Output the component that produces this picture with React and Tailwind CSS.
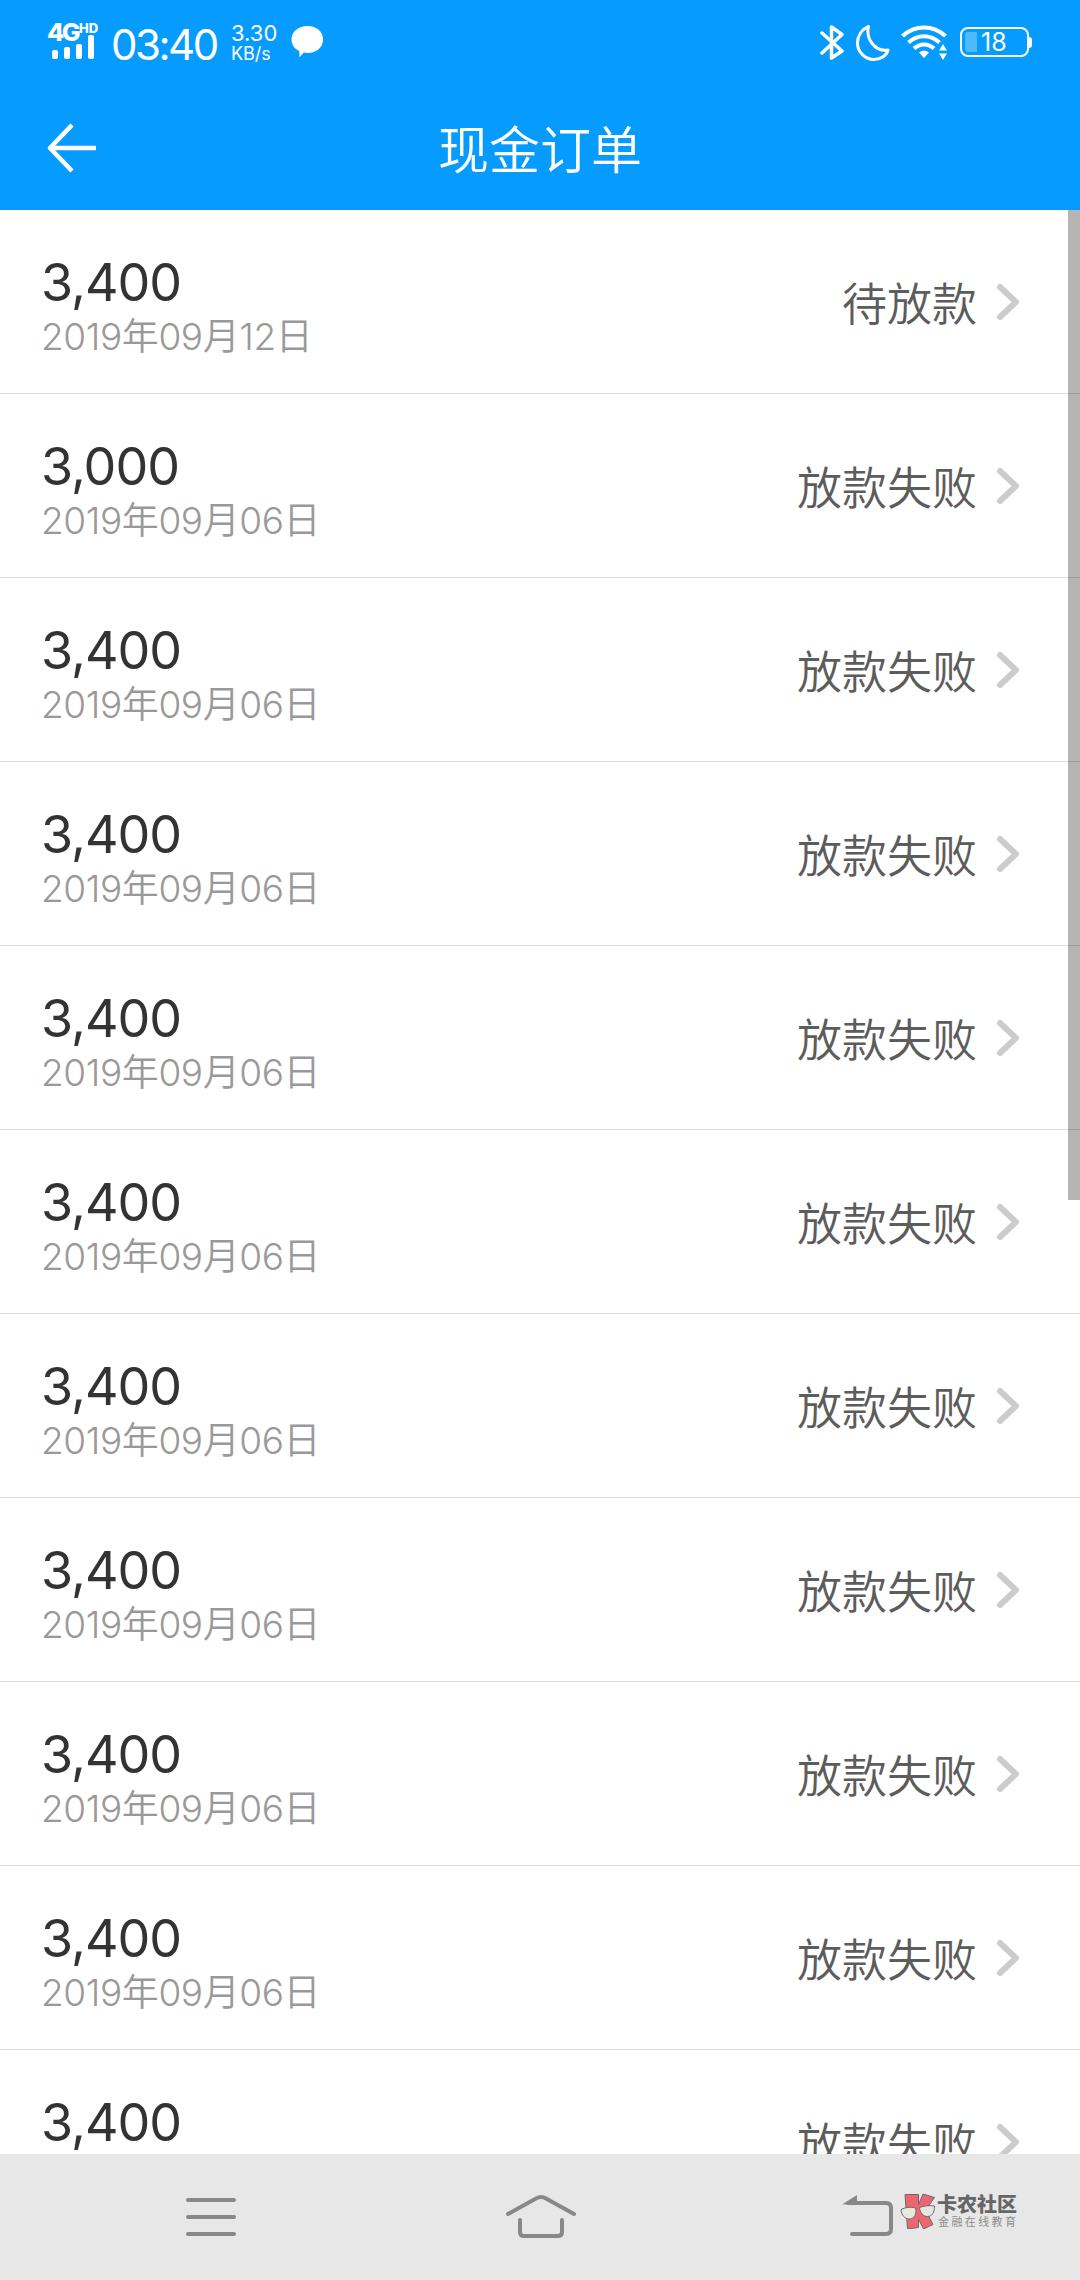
import React from 'react';

const ORDERS = [
  { id: 1, amount: '3,400', date: '2019年09月12日', status: '待放款' },
  { id: 2, amount: '3,000', date: '2019年09月06日', status: '放款失败' },
  { id: 3, amount: '3,400', date: '2019年09月06日', status: '放款失败' },
  { id: 4, amount: '3,400', date: '2019年09月06日', status: '放款失败' },
  { id: 5, amount: '3,400', date: '2019年09月06日', status: '放款失败' },
  { id: 6, amount: '3,400', date: '2019年09月06日', status: '放款失败' },
  { id: 7, amount: '3,400', date: '2019年09月06日', status: '放款失败' },
  { id: 8, amount: '3,400', date: '2019年09月06日', status: '放款失败' },
  { id: 9, amount: '3,400', date: '2019年09月06日', status: '放款失败' },
  { id: 10, amount: '3,400', date: '2019年09月06日', status: '放款失败' },
  { id: 11, amount: '3,400', date: '2019年09月06日', status: '放款失败' },
];

const SignalIcon = () => (
  <div className="flex flex-col w-[54px] h-[36px] shrink-0">
    <div className="flex items-start h-[19px] -ml-[1px] font-extrabold leading-none">
      <span className="text-[25px] leading-[19px] tracking-[-2.5px]">4G</span>
      <span className="ml-[1px] text-[13px] leading-[11px]">HD</span>
    </div>
    <svg className="-mt-[8px] ml-[3px] shrink-0" width="44" height="25" viewBox="0 0 44 25" fill="currentColor">
      <rect x="1" y="16" width="6" height="9" rx="2" />
      <rect x="13" y="13" width="6" height="12" rx="2" />
      <rect x="25" y="10" width="6" height="15" rx="2" />
      <rect x="37" y="1" width="6" height="24" rx="2" />
    </svg>
  </div>
);

const StatusBar = () => (
  <div className="flex items-start h-[84px] pl-[48px] pr-[48px] pt-[23px]">
    <SignalIcon />
    <span className="ml-[9px] text-[42px] leading-[44px] w-[120px] tracking-[-2.5px]">03:40</span>
    <div className="flex flex-col w-[60px]">
      <span className="text-[22px] leading-[20px]">3.30</span>
      <span className="text-[18px] leading-[21px]">KB/s</span>
    </div>
    <svg className="mt-[3px]" width="33" height="32" viewBox="0 0 33 32" fill="currentColor">
      <path d="M16.500 0C25.500 0 32 5.500 32 13.500S25.500 27 16.500 27c-1.300 0-2.600 0-3.800-.4-1.200 1.800-2.700 3.600-4.500 4.400.4-2 .3-4 0-6C3.500 22.800.5 18.500.5 13.500.5 5.500 7.500 0 16.500 0z" />
    </svg>

    <div className="ml-auto flex items-start pt-[2px]">
      <svg width="25" height="35" viewBox="0 0 25 35" fill="none" stroke="currentColor" strokeWidth="3.500" strokeLinejoin="round" strokeLinecap="round">
        <path d="M2 8l20 18-10.500 7V2L22 9.500 2 28" />
      </svg>
      <svg className="ml-[11px]" width="34" height="36" viewBox="0 0 34 36" fill="none" stroke="currentColor" strokeWidth="3" strokeLinejoin="round">
        <path d="M12.500 1.500C5.500 4.500 1.500 11 1.500 18c0 9 7.500 16.500 16.500 16.500 7 0 12.500-4 14-9.500-6 1-11.500-1-15.500-6-4-5-5.500-11-4-17.500z" />
      </svg>
      <svg className="ml-[11px]" width="48" height="36" viewBox="0 0 48 36" fill="none" stroke="currentColor" strokeWidth="4">
        <path d="M1.500 11c12.500-11.500 30.500-11.500 43 0" />
        <path d="M7.500 17.500c9-8.500 22-8.500 31 0" />
        <path d="M13 23.500c5.500-5.500 14.500-5.500 20 0" />
        <path d="M18 27.500c3-2.500 7-2.500 10 0l-5 5.500z" fill="currentColor" stroke="none" />
        <path d="M38 25.500l4-6.500 4 6.500zM38 28.500l4 6.500 4-6.500z" fill="currentColor" stroke="none" />
      </svg>
      <div className="ml-[11px] mt-[2px] flex items-center">
        <div className="flex items-center w-[69px] h-[30px] rounded-[8px] border-2 border-white pl-[3px]">
          <div className="w-[12px] h-[20px] rounded-l-[3px] bg-white/30" />
          <span className="ml-[4px] text-[25px] leading-[26px]">18</span>
        </div>
        <div className="w-[3px] h-[11px] rounded-r-[3px] bg-white" />
      </div>
    </div>
  </div>
);

const TitleBar = () => (
  <div className="grid grid-cols-[100px_1fr_100px] items-center h-[126px]">
    <svg className="ml-[46px] mt-[1px]" width="52" height="50" viewBox="0 0 52 50" fill="none" stroke="currentColor" strokeWidth="4.500">
      <path d="M50 25H4M26 2L4 25l22 23" strokeLinejoin="round" />
    </svg>
    <h1 className="pt-[8px] text-center text-[51px] leading-[60px] font-[350]">现金订单</h1>
  </div>
);

const OrderRow = ({ order }) => (
  <li className="flex items-center justify-between h-[184px] shrink-0 border-b border-[#dedede] pl-[41px] pr-[60px]">
    <div className="flex flex-col pt-[8px]">
      <span className="text-[52px] leading-[62px] font-[380] tracking-[-1px] text-[#333]">{order.amount}</span>
      <span className="text-[37px] leading-[46px] font-[350] tracking-[-0.4px] text-[#999]">{order.date}</span>
    </div>
    <div className="flex items-center">
      <span className="pt-[6px] text-[45px] leading-[60px] font-[350] text-[#5c5c5c]">{order.status}</span>
      <svg className="ml-[19px]" width="24" height="38" viewBox="0 0 24 38" fill="none" stroke="#ccc" strokeWidth="6" strokeLinecap="round" strokeLinejoin="round">
        <path d="M4 4l16 15L4 34" />
      </svg>
    </div>
  </li>
);

const Watermark = () => (
  <div className="flex items-start">
    <svg width="36" height="36" viewBox="0 0 36 36" stroke="#6b6b6b" strokeWidth="1" strokeLinejoin="round">
      <path d="M5 1.500h13.500v10L23 1l11.500 3.500L25.500 17l7.500 14.500-9.500 4.500-5-10v8.500L7.500 36z" fill="#ec6570" />
      <path d="M1 16.500c4.500-2 9.500-3 14.500-1.500 1.500 6-1 10.500-6 11C4.500 26 1.500 22 1 16.500zM19.500 14.500c4.500-1.500 9-2.500 15-1.500 0 6.500-2.500 10.500-7 10.500-4.500 0-7.500-3.500-8-9z" fill="#e7e7e0" />
    </svg>
    <div className="ml-[1px] mt-[2px] flex flex-col">
      <span className="text-[20px] leading-[20px] font-black text-[#666]">卡农社区</span>
      <span className="ml-[1px] text-[11px] leading-[14px] tracking-[2.400px] text-[#8c8c8c]">金融在线教育</span>
    </div>
  </div>
);

const NavBar = () => (
  <nav className="flex items-start h-[126px] shrink-0 bg-[#e7e7e7] pt-[39px] pl-[184px]">
    <svg className="mt-[4px]" width="54" height="42" viewBox="0 0 54 42" stroke="#888" strokeWidth="4" strokeLinecap="round">
      <path d="M4 3h46M4 20h46M4 37h46" />
    </svg>
    <svg className="ml-[266px] mt-[1px]" width="74" height="46" viewBox="0 0 74 46" fill="none" stroke="#888" strokeWidth="4" strokeLinecap="round" strokeLinejoin="round">
      <path d="M4 20L32 4.500Q37 1.500 42 4.500L70 20" />
      <path d="M16 26v12q0 4 4 4h34q4 0 4-4V26" />
    </svg>
    <svg className="ml-[264px] mt-[1px]" width="54" height="44" viewBox="0 0 54 44" fill="none" stroke="#888" strokeWidth="4" strokeLinecap="round">
      <path d="M6 9h38q5 0 5 5v21q0 5-5 5H10" />
      <path d="M0 10.500L15 1v9.500z" fill="#888" stroke="none" />
    </svg>
    <div className="ml-[4px]">
      <Watermark />
    </div>
  </nav>
);

export default function App() {
  return (
    <div className="flex flex-col w-[1080px] h-[2280px] overflow-hidden bg-white font-['Inter','Noto_Sans_CJK_SC',sans-serif]">
      <header className="h-[210px] shrink-0 bg-[#069bff] text-white">
        <StatusBar />
        <TitleBar />
      </header>

      <main className="relative flex-1 min-h-0 overflow-hidden">
        <ul className="flex flex-col">
          {ORDERS.map((order) => (
            <OrderRow key={order.id} order={order} />
          ))}
        </ul>
        {/* Scroll indicator sits over the list */}
        <div className="absolute right-0 top-0 w-[12px] h-[990px] bg-black/29" />
      </main>

      <NavBar />
    </div>
  );
}
